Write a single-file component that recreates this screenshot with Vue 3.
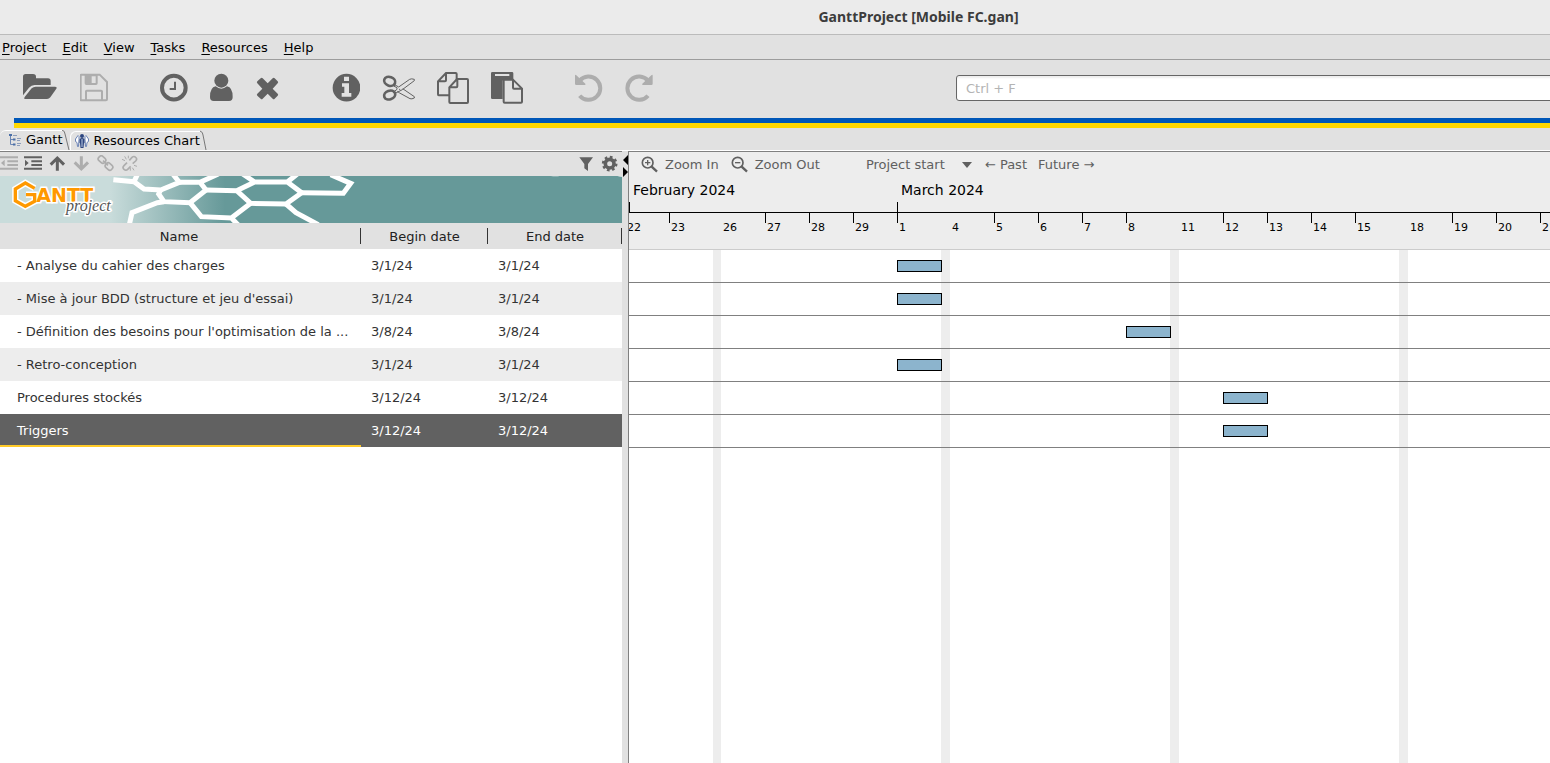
<script setup>
import { ref } from 'vue'

const menus = ['Project', 'Edit', 'View', 'Tasks', 'Resources', 'Help']
const search = ref('')
const scrollTarget = ref('Project start')

const DAY = 44
const tasks = [
  { name: "- Analyse du cahier des charges", begin: '3/1/24', end: '3/1/24', left: 268 },
  { name: "- Mise à jour BDD (structure et jeu d'essai)", begin: '3/1/24', end: '3/1/24', left: 268 },
  { name: "- Définition des besoins pour l'optimisation de la ...", begin: '3/8/24', end: '3/8/24', left: 497 },
  { name: "- Retro-conception", begin: '3/1/24', end: '3/1/24', left: 268 },
  { name: "Procedures stockés", begin: '3/12/24', end: '3/12/24', left: 594 },
  { name: "Triggers", begin: '3/12/24', end: '3/12/24', left: 594, selected: true },
]

const weeks = [
  { days: [22, 23], rest: 8 },
  { days: [26, 27, 28, 29, 1], rest: 9 },
  { days: [4, 5, 6, 7, 8], rest: 9 },
  { days: [11, 12, 13, 14, 15], rest: 9 },
  { days: [18, 19, 20, 21], rest: 9 },
]
</script>

<template>
  <div class="app">
    <header class="titlebar">GanttProject [Mobile FC.gan]</header>

    <nav class="menubar">
      <button v-for="m in menus" :key="m" type="button"><u>{{ m[0] }}</u>{{ m.slice(1) }}</button>
    </nav>

    <div class="toolbar">
      <button type="button" aria-label="Open">
        <svg width="36" height="32" viewBox="66 108 108 96"><path d="M69 178V122q0-8 8-8h22q9 0 9 8v5h36q8 0 8 8v12H104q-10 0-17 8z" /><path d="M77 189h64q6 0 10-5l18-26q3-6-4-6H107q-7 0-12 5L74 183q-4 6 3 6z" /></svg>
      </button>
      <button type="button" class="off" aria-label="Save">
        <svg width="28" height="32" viewBox="240 108 84 96"><path class="ln" d="M243 116h56l22 22v52q0 3-3 3h-75q-1 0-1-3v-71q0-3 1-3z" /><path class="ln" d="M258 193v-27q0-2 2-2h43q3 0 3 2v27" /><path fill-rule="evenodd" d="M254 115h39v27q0 5-5 5h-29q-5 0-5-5zM275 121v20h12v-20z" /></svg>
      </button>
      <button type="button" class="group" aria-label="New task">
        <svg width="28" height="32" viewBox="480 108 84 96"><circle class="ln" cx="521.500" cy="155" r="35.500" stroke-width="12" /><path class="ln" d="M525 137v22h-16" stroke-width="6" /></svg>
      </button>
      <button type="button" aria-label="New resource">
        <svg width="24" height="32" viewBox="630 108 72 96"><circle cx="664" cy="134" r="21" /><path d="M647 151q17 14 34 0q17 3 17 32q0 12-11 12h-46q-11 0-11-12q0-29 17-32z" /></svg>
      </button>
      <button type="button" aria-label="Delete">
        <svg width="24" height="32" viewBox="768 108 72 96"><path d="M782 127q3-3 6 0l15 15 15-15q3-3 6 0l9 9q3 3 0 6l-15 16 15 15q3 3 0 6l-9 9q-3 3-6 0l-15-15-15 15q-3 3-6 0l-10-9q-3-3 0-6l15-15-15-16q-3-3 0-6z" /></svg>
      </button>
      <button type="button" class="group" aria-label="Properties">
        <svg width="28" height="32" viewBox="36 36 84 96"><circle cx="79.500" cy="83" r="41.500" /><path class="bg" d="M72 50h15v13H72zM66 70h21v29h7v11H65V99h8V80h-7z" /></svg>
      </button>
      <button type="button" aria-label="Cut">
        <svg width="33" height="32" viewBox="186 36 99 96"><ellipse class="ln" cx="209" cy="64" rx="17" ry="13" transform="rotate(20 209 64)" stroke-width="8" /><ellipse class="ln" cx="209" cy="105" rx="17" ry="13" transform="rotate(-20 209 105)" stroke-width="8" /><path class="ln" stroke-width="3" d="M224 74l12 7 33-23q5-3 14 0v4l-36 27-23 12-3-5 10-8v-5l-10-5zM232 94l7 5 31 17q5 2 13-2v-4l-35-24" /><circle cx="239" cy="88" r="2" /></svg>
      </button>
      <button type="button" aria-label="Copy">
        <svg width="32" height="32" viewBox="351 36 96 96"><path class="ln" d="M387 106h-31q-2 0-2-3V64l24-25h29q3 0 3 3v17M354 64h21q3 0 3-3V39" /><path class="ln" d="M411 57h30q3 0 3 3v66q0 3-3 3h-50q-3 0-3-3V82zM388 82h21q3 0 3-3V57" /></svg>
      </button>
      <button type="button" aria-label="Paste">
        <svg width="32" height="32" viewBox="513 36 96 96"><path d="M517 36h59q4 0 4 4v20h-29q-3 0-3 3v54h-31q-4 0-4-4V40q0-4 4-4z" /><path class="bg" d="M525 42h43v6h-43z" /><path class="ln page" d="M554 59h25l27 27v39q0 3-3 3h-49q-3 0-3-3V62q0-3 3-3zM579 59v24q0 3 3 3h24" /></svg>
      </button>
      <button type="button" class="off group" aria-label="Undo">
        <svg width="28" height="32" viewBox="765 36 84 96"><path class="ln" d="M779 62A35 35 0 1 1 779 107" stroke-width="12" /><path d="M765 47q0-5 4-1l27 25q2 4-2 4h-25q-4 0-4-4z" /></svg>
      </button>
      <button type="button" class="off" aria-label="Redo">
        <svg width="28" height="32" viewBox="915 36 84 96"><path class="ln" d="M984 62A35 35 0 1 0 984 107" stroke-width="12" /><path d="M998 47q0-5-4-1l-27 25q-2 4 2 4h25q4 0 4-4z" /></svg>
      </button>
      <input v-model="search" type="text" class="search" placeholder="Ctrl + F" aria-label="Search" />
    </div>
    <div class="flag"></div>

    <div class="tabs" role="tablist">
      <button type="button" role="tab" aria-selected="true" class="tab">
        <svg width="12" height="12" viewBox="0 0 12 12" fill="none"><path d="M1.500 2v8.500h3M1.500 5.500h3" fill="none" stroke="#6c87b4" /><path d="M0 1h3M4 5.500h2.500M4 10.500h2.500" stroke="#4a6fa8" stroke-width="2" /><path d="M4 1.500h4M8 4.500h4M8 6.500h3M8 9.500h4M8 11.500h3" stroke="#8c9dbb" /></svg>
        Gantt
      </button>
      <svg class="edge" width="8" height="20" viewBox="0 0 8 20"><path d="M0 0q3 1 3 4l4 16" fill="none" stroke="#777" /></svg>
      <button type="button" role="tab" aria-selected="false" class="tab second">
        <svg width="14" height="14" viewBox="0 0 14 14"><g fill="#fff" stroke="#6b83b5"><path d="M3 1.500l1 1v3l-.5 7h-1l-.5-4-1.500-1V5zM11 1.500l-1 1v3l.5 7h1l.5-4 1.500-1V5z" /></g><circle cx="7" cy="2" r="2" fill="#2d4680" /><path d="M4.500 5q2.500-2 5 0v4H9l-.5 5h-3L5 9h-.5z" fill="#2d4680" /><path d="M7 5v8" stroke="#c3d0e8" /></svg>
        Resources Chart
      </button>
      <svg class="edge" width="8" height="20" viewBox="0 0 8 20"><path d="M0 1q3 1 3 4l3 15" fill="none" stroke="#777" /></svg>
    </div>

    <main class="workspace">
      <section class="left">
        <div class="treebar">
          <button type="button" class="off" aria-label="Outdent"><svg width="18" height="18" viewBox="0 120 54 54"><path d="M0 124h54v6H0zM22 136h32v6H22zM22 147h32v6H22zM0 158h54v6H0zM14 134v20L3 144z" /></svg></button>
          <button type="button" aria-label="Indent"><svg width="18" height="18" viewBox="72 120 54 54"><path d="M72 124h54v6H72zM94 136h32v6H94zM94 147h32v6H94zM72 158h54v6H72zM75 134v20l11-10z" /></svg></button>
          <button type="button" aria-label="Move up"><svg width="18" height="18" viewBox="144 120 54 54"><path class="ln" d="M172 167v-34M152 149l20-20 20 20" stroke-width="9" /></svg></button>
          <button type="button" class="off" aria-label="Move down"><svg width="18" height="18" viewBox="216 120 54 54"><path class="ln" d="M244 124v34M224 142l20 20 20-20" stroke-width="9" /></svg></button>
          <button type="button" class="off" aria-label="Link"><svg width="18" height="18" viewBox="288 120 54 54"><rect class="ln" x="295" y="125" width="23" height="17" rx="7" transform="rotate(42 306 133)" /><rect class="ln" x="316" y="146" width="23" height="17" rx="7" transform="rotate(42 327 154)" /><path class="ln" d="M309 137l15 14" /></svg></button>
          <button type="button" class="off" aria-label="Unlink"><svg width="18" height="18" viewBox="360 120 54 54"><path class="ln" d="M388 136l8-9q6-5 11 0 6 5 0 11l-9 8M381 143l-9 9q-6 6 0 11 6 5 11 0l9-9" /><path class="ln" stroke-width="3" d="M374 124l5 9M366 133l9 4M385 122v8M402 151l9 3M397 158l5 8M391 159v8" /></svg></button>
          <button type="button" class="push" aria-label="Filter"><svg width="18" height="18" viewBox="111 30 54 54"><path d="M118 37h41l-15 20v21l-11-8V57z" /></svg></button>
          <button type="button" aria-label="Settings"><svg width="18" height="18" viewBox="183 30 54 54"><circle class="ln" cx="209" cy="56" r="13" stroke-width="11" /><circle class="ln" cx="209" cy="56" r="20" stroke-width="7" stroke-dasharray="8 7.700" /></svg></button>
        </div>

        <div class="banner">
          <svg width="622" height="47" viewBox="0 18 1866 141" role="img" aria-label="GanttProject">
            <g fill="none" stroke="#fff" stroke-width="15">
              <path d="M340 29L402 35L432 57L482 60L538 37L520 14M402 35L412 14" />
              <path d="M538 37L600 37L655 12M600 37L618 60L570 98L492 95L476 72L482 60M570 98" />
              <path d="M618 60L710 62L764 36L862 36L905 68L858 102L752 100L710 62M764 36L728 12M862 36L892 12" />
              <path d="M905 68L1030 70L1052 40L992 14" />
              <path d="M752 100L694 144L604 140L570 98M694 144L714 164M858 102L888 128L955 164" />
              <path d="M492 95L472 98L396 128L388 164" />
            </g>
            <path d="M1636 14h60q-30 10-60 0zM1840 14h30v6q-16 0-30-6z" fill="#fff" />
            <path d="M104 55L76 39L46 57V92L76 109L104 94V74H78" fill="none" stroke="#fff" stroke-width="19" />
            <text x="109" y="95" class="gantt">ANTT</text>
            <path d="M104 55L76 39L46 57V92L76 109L104 94V74H78" fill="none" stroke="#ff9900" stroke-width="10" />
            <text x="198" y="123" class="project">project</text>
          </svg>
        </div>

        <table class="tasks">
          <colgroup><col class="c-name" /><col class="c-begin" /><col /></colgroup>
          <thead><tr><th>Name</th><th>Begin date</th><th>End date</th></tr></thead>
          <tbody>
            <tr v-for="t in tasks" :key="t.name" :class="{ selected: t.selected }">
              <td class="name">{{ t.name }}</td><td>{{ t.begin }}</td><td>{{ t.end }}</td>
            </tr>
          </tbody>
        </table>
      </section>

      <div class="splitter">
        <svg width="6" height="22" viewBox="0 0 6 22"><path d="M6 0v10L1 5zM1 12v10l5-5z" /></svg>
      </div>

      <section class="right">
        <div class="chartbar">
          <button type="button" class="zin"><svg width="18" height="18" viewBox="303 30 54 54"><circle class="ln" cx="323" cy="50" r="16" /><path class="ln" d="M335 62l16 15" stroke-width="7" /><path class="ln" stroke-width="4" d="M315 50h16M323 42v16" /></svg>Zoom In</button>
          <button type="button" class="zout"><svg width="18" height="18" viewBox="303 30 54 54"><circle class="ln" cx="323" cy="50" r="16" /><path class="ln" d="M335 62l16 15" stroke-width="7" /><path class="ln" stroke-width="4" d="M315 50h16" /></svg>Zoom Out</button>
          <label class="scroll">
            <select v-model="scrollTarget" aria-label="Scroll to"><option>Project start</option><option>Today</option><option>Project end</option></select>
            <svg width="10" height="6" viewBox="0 0 10 6"><path d="M0 0h10L5 6z" /></svg>
          </label>
          <button type="button">← Past</button>
          <button type="button">Future →</button>
        </div>

        <div class="timeline">
          <div class="months"><div class="month feb">February 2024</div><div class="month">March 2024</div></div>
          <div class="days">
            <div v-for="(w, i) in weeks" :key="i" class="week" :style="{ marginRight: w.rest + 'px' }">
              <span v-for="d in w.days" :key="d" class="day" :style="{ width: DAY + 'px' }">{{ d }}</span>
            </div>
          </div>
        </div>

        <div class="chart">
          <div class="stripes" aria-hidden="true">
            <i v-for="(w, i) in weeks" :key="i" :style="{ marginLeft: w.days.length * DAY + 'px', width: w.rest + 'px' }"></i>
          </div>
          <div v-for="t in tasks" :key="t.name" class="lane">
            <div class="bar" :style="{ marginLeft: t.left + 'px' }"></div>
          </div>
        </div>
      </section>
    </main>
  </div>
</template>

<style>
body { margin: 0; overflow: hidden; }
</style>

<style scoped>
.app { display: flex; flex-direction: column; min-height: 100vh; background: #e1e1e1; color: #000; font: 13px/16px "DejaVu Sans", sans-serif; overflow: hidden; }
.app * { box-sizing: border-box; }
button, select, input { font: inherit; color: inherit; background: none; border: 0; margin: 0; padding: 0; }
svg { display: block; flex: none; fill: currentColor; }
.toolbar svg { stroke-width: 6; }
.treebar svg, .chartbar svg { stroke-width: 5; }
.ln { fill: none; stroke: currentColor; }
.bg { fill: #e1e1e1; }

.titlebar { height: 35px; padding-left: 287px; background: #ebebeb; border-bottom: 1px solid #bbb; color: #3c3c3c; font: bold 14px/33px "Noto Sans", "Open Sans", sans-serif; text-align: center; }
.menubar { display: flex; gap: 16px; height: 25px; padding: 1px 0 0 2px; border-bottom: 1px solid #9c9c9c; }
.menubar u { text-underline-offset: 2px; text-decoration-thickness: 1px; }

.toolbar { display: flex; align-items: center; gap: 22px; height: 58px; padding: 0 0 2px 22px; color: #616161; overflow: hidden; }
.group { margin-left: 30px; }
.off { color: #adadad; }
.page { fill: #e1e1e1; }
.search { flex: 1; height: 26px; min-width: 0; margin: 0 -5px 0 281px; padding: 0 9px; border: 1px solid #666; border-radius: 3px; background: #fff; box-shadow: inset 0 2px 2px #eee; color: #333; }
.search::placeholder { color: #b4b4b4; opacity: 1; }
.flag { height: 10px; margin-left: 14px; border-top: 5px solid #0057b8; background: #ffd700; }

.tabs { display: flex; align-items: flex-end; height: 23px; border-bottom: 1px solid #fff; }
.tab { display: flex; align-items: center; gap: 5px; height: 20px; padding: 0 0 2px 9px; border-top: 1px solid #fff; border-radius: 6px 0 0; }
.tab.second { gap: 4px; height: 19px; padding: 0 0 1px 4px; border-left: 1px solid #fff; }

.workspace { display: flex; flex: 1; min-height: 0; }
.left { flex: none; width: 622px; border-top: 1px solid #808080; background: #fff; }
.treebar { display: flex; align-items: center; gap: 6px; height: 24px; padding-right: 3px; background: #e1e1e1; color: #616161; }
.treebar .off { color: #adadad; }
.push { margin-left: auto; }
.banner { height: 47px; background: linear-gradient(90deg, #c9dcdb 0, #c9dcdb 110px, #669999 225px); overflow: hidden; }
.gantt { font: bold 57px "DejaVu Sans", sans-serif; fill: #ff9900; stroke: #fff; stroke-width: 9px; paint-order: stroke; }
.project { font: italic 48px "Liberation Serif", serif; fill: #555; stroke: #fff; stroke-width: 9px; paint-order: stroke; }

.tasks { width: 100%; table-layout: fixed; border-collapse: collapse; color: #333; }
.c-name { width: 361px; }
.c-begin { width: 127px; }
th { position: relative; height: 26px; padding: 2px 0 0; background: #e1e1e1; font-weight: normal; color: #222; }
th:first-child { padding-right: 3px; }
th::after { content: ""; position: absolute; right: 0; top: 5px; height: 16px; border-right: 1px solid #333; }
td { height: 33px; padding: 0 10px; white-space: nowrap; overflow: hidden; }
td.name { padding-left: 17px; }
tbody tr:nth-child(even) { background: #ededed; }
tbody tr.selected { background: #616161; color: #fff; }
.selected .name { box-shadow: inset 0 -2px #ffca28; }

.splitter { flex: none; width: 6px; padding-top: 4px; background: #e1e1e1; }
.right { display: flex; flex-direction: column; flex: 1; min-width: 0; border: solid #808080; border-width: 1px 0 0 1px; background: #ededed; overflow: hidden; }
.chartbar { display: flex; align-items: center; height: 24px; padding: 1px 0 0 12px; color: #606060; white-space: nowrap; }
.chartbar button { display: flex; align-items: center; margin-right: 11px; }
.chartbar .zin, .chartbar .zout { gap: 6px; }
.chartbar .zin { margin-right: 12px; }
.chartbar .zout { margin-right: 46px; }
.scroll { display: flex; align-items: center; margin-right: 13px; }
.scroll select { width: 96px; appearance: none; }

.timeline { height: 74px; border-bottom: 1px solid #ccc; }
.months { display: flex; height: 37px; border-bottom: 1px solid #000; font-size: 14px; line-height: 28px; background: linear-gradient(#000, #000) 0 100% / 1px 10px no-repeat; }
.month { padding-left: 4px; white-space: nowrap; }
.month.feb { flex: none; width: 268px; }
.month:last-child { background: linear-gradient(#000, #000) 0 100% / 1px 10px no-repeat; }
.days { display: flex; margin-left: -4px; }
.week { display: flex; flex: none; }
.day { flex: none; height: 23px; padding: 7px 0 0 2px; font-size: 11px; background: linear-gradient(#000, #000) 0 0 / 1px 10px no-repeat; }
.day:first-child { background: none; }

.chart { position: relative; flex: 1; background: #fff; }
.stripes { position: absolute; inset: 0; display: flex; margin-left: -4px; overflow: hidden; }
.stripes i { flex: none; background: #ededed; }
.lane { position: relative; height: 33px; padding-top: 10px; border-bottom: 1px solid #808080; }
.bar { width: 45px; height: 12px; border: 1px solid #000; background: #8cb4cd; }
</style>
